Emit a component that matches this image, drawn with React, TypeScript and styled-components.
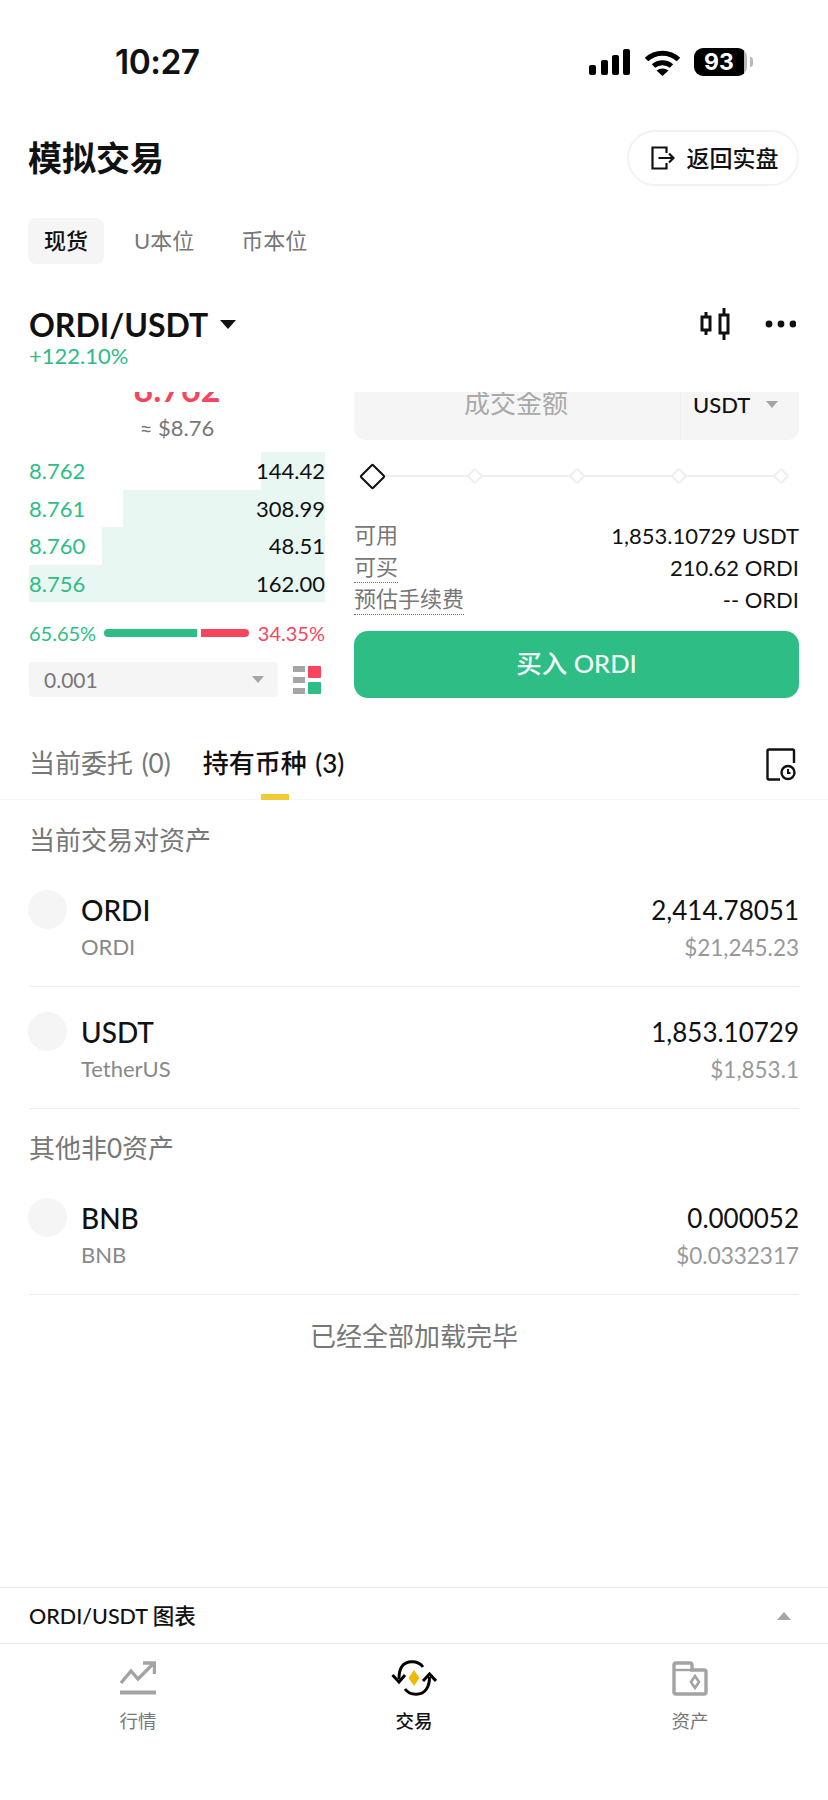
import * as React from "react";
import styled, { createGlobalStyle } from "styled-components";

const GlobalStyle = createGlobalStyle`
  html, body {
    margin: 0;
    padding: 0;
    background: #ffffff;
  }
  body {
    font-family: Lato, "Noto Sans CJK SC", sans-serif;
    color: #111111;
  }
`;

const Page = styled.div`
  width: 828px;
  height: 1800px;
  display: flex;
  flex-direction: column;
  overflow: hidden;
  background: #ffffff;
`;

const StatusBar = styled.div`
  height: 124px;
  padding: 0 81px 0 115px;
  display: flex;
  align-items: center;
  justify-content: space-between;
  box-sizing: border-box;
`;

const Clock = styled.span`
  font-family: Inter, sans-serif;
  font-size: 33.5px;
  font-weight: 600;
  letter-spacing: -0.5px;
`;

const StatusIcons = styled.div`
  display: flex;
  align-items: center;
  gap: 13px;
`;

const Battery = styled.div`
  position: relative;
  width: 53px;
  height: 28px;
  box-sizing: border-box;
  padding-right: 3px;
  border-radius: 9px;
  background: linear-gradient(to right, #000000 94%, #b9b9b9 94%);
  color: #ffffff;
  font-family: Inter, sans-serif;
  font-size: 23px;
  font-weight: 700;
  line-height: 28px;
  text-align: center;

  &::after {
    content: "";
    position: absolute;
    right: -6px;
    top: 9px;
    width: 3px;
    height: 10px;
    border-radius: 0 3px 3px 0;
    background: #b9b9b9;
  }
`;

const Header = styled.div`
  margin-top: 6px;
  padding: 0 29px 0 28px;
  height: 56px;
  display: flex;
  align-items: center;
  justify-content: space-between;
`;

const Title = styled.h1`
  margin: 0 0 4px;
  font-size: 34px;
  font-weight: 700;
`;

const BackButton = styled.div`
  width: 172px;
  height: 56px;
  box-sizing: border-box;
  padding-left: 3px;
  display: flex;
  align-items: center;
  justify-content: center;
  gap: 12px;
  border: 2px solid #f2f2f2;
  border-radius: 28px;
  font-size: 23px;
  font-weight: 500;
`;

const BackLabel = styled.span`
  margin-bottom: 2px;
`;

const MarketTabs = styled.div`
  margin-top: 32px;
  padding: 0 28px;
  display: flex;
  gap: 47px;
`;

const MarketTab = styled.div<{ $active?: boolean }>`
  height: 46px;
  box-sizing: border-box;
  padding: 0 ${(p) => (p.$active ? "16px" : "0")} 4px;
  margin-right: ${(p) => (p.$active ? "-17px" : "0")};
  display: flex;
  align-items: center;
  border-radius: 8px;
  font-size: 22px;
  font-weight: ${(p) => (p.$active ? 500 : 400)};
  color: ${(p) => (p.$active ? "#111111" : "#777777")};
  background: ${(p) => (p.$active ? "#f5f5f5" : "transparent")};
`;

const PairRow = styled.div`
  margin-top: 40px;
  padding: 0 32px 0 29px;
  height: 40px;
  display: flex;
  align-items: center;
  justify-content: space-between;
`;

const PairName = styled.div`
  display: flex;
  align-items: center;
  gap: 12px;
  font-size: 32px;
  font-weight: 700;
`;

const Caret = styled.span<{ $size: number; $color: string; $up?: boolean }>`
  display: inline-block;
  width: 0;
  height: 0;
  border-left: ${(p) => p.$size}px solid transparent;
  border-right: ${(p) => p.$size}px solid transparent;
  border-top: ${(p) => (p.$up ? "0" : `${p.$size + 1}px solid ${p.$color}`)};
  border-bottom: ${(p) => (p.$up ? `${p.$size + 1}px solid ${p.$color}` : "0")};
`;

const PairTools = styled.div`
  display: flex;
  align-items: center;
  gap: 35px;
`;

const Change = styled.div`
  padding-left: 29px;
  height: 24px;
  line-height: 24px;
  font-size: 22px;
  color: #2ebd85;
`;

const TradePanel = styled.div`
  margin-top: 24px;
  height: 328px;
  padding: 0 29px;
  overflow: hidden;
  display: grid;
  grid-template-columns: 296px 445px;
  column-gap: 29px;
  align-content: start;
`;

const BookColumn = styled.div`
  display: flex;
  flex-direction: column;
`;

const LastPrice = styled.div`
  margin-top: -21px;
  height: 36px;
  line-height: 36px;
  text-align: center;
  font-size: 34px;
  font-weight: 700;
  color: #f6465d;
`;

const FiatPrice = styled.div`
  margin-top: 9px;
  height: 24px;
  line-height: 24px;
  text-align: center;
  font-size: 22px;
  color: #777777;
`;

const Book = styled.div`
  margin-top: 12px;
`;

const BookRow = styled.div`
  position: relative;
  height: 37.6px;
  display: flex;
  align-items: center;
  justify-content: space-between;
  font-size: 22px;
`;

const DepthBar = styled.div`
  position: absolute;
  top: 0;
  right: 0;
  bottom: 0;
  background: #e9f7f2;
`;

const BookPrice = styled.span`
  position: relative;
  color: #2ebd85;
`;

const BookQty = styled.span`
  position: relative;
  color: #111111;
`;

const Ratio = styled.div`
  margin-top: 21px;
  height: 20px;
  display: flex;
  align-items: center;
  font-size: 20px;
`;

const RatioBuy = styled.span`
  width: 75px;
  color: #2ebd85;
`;

const RatioSell = styled.span`
  margin-left: auto;
  color: #f6465d;
`;

const RatioBar = styled.div<{ $color: string; $side: "left" | "right" }>`
  height: 8px;
  background: ${(p) => p.$color};
  border-radius: ${(p) => (p.$side === "left" ? "4px 0 0 4px" : "0 4px 4px 0")};
`;

const BookFooter = styled.div`
  margin-top: 19px;
  display: flex;
  align-items: center;
  justify-content: space-between;
`;

const StepSelect = styled.div`
  width: 249px;
  height: 35px;
  box-sizing: border-box;
  padding: 0 14px 0 15px;
  display: flex;
  align-items: center;
  justify-content: space-between;
  border-radius: 4px;
  background: #f5f5f5;
  font-size: 21px;
  color: #777777;
`;

const LayoutSwitch = styled.span`
  margin-right: 4px;
  height: 28px;
`;

const OrderColumn = styled.div`
  display: flex;
  flex-direction: column;
`;

const AmountInput = styled.div`
  margin-top: -24px;
  height: 72px;
  display: flex;
  align-items: center;
  border-radius: 12px;
  background: #f5f5f5;
`;

const AmountLabel = styled.div`
  flex: 1;
  margin-bottom: 6px;
  padding-right: 2px;
  text-align: center;
  font-size: 26px;
  color: #a9a9a9;
`;

const UnitPicker = styled.div`
  width: 119px;
  height: 72px;
  box-sizing: border-box;
  padding: 0 21px 0 12px;
  display: flex;
  align-items: center;
  justify-content: space-between;
  border-left: 1px solid #eeeeee;
  font-size: 22px;
  font-weight: 500;
`;

const Slider = styled.div`
  position: relative;
  margin: 23px 6px 0 6px;
  height: 26px;
  display: flex;
  align-items: center;
  justify-content: space-between;

  &::before {
    content: "";
    position: absolute;
    left: 12px;
    right: 8px;
    top: 12px;
    height: 2px;
    background: #f0f0f0;
  }
`;

const Stop = styled.span<{ $active?: boolean }>`
  position: relative;
  box-sizing: border-box;
  width: ${(p) => (p.$active ? 19 : 12)}px;
  height: ${(p) => (p.$active ? 19 : 12)}px;
  margin: 0 ${(p) => (p.$active ? 3 : 6.5)}px;
  transform: rotate(45deg);
  border-radius: 2px;
  background: #ffffff;
  border: 2px solid ${(p) => (p.$active ? "#111111" : "#eeeeee")};
`;

const InfoList = styled.div`
  margin-top: 30px;
`;

const InfoRow = styled.div`
  height: 32px;
  display: flex;
  align-items: center;
  justify-content: space-between;
  font-size: 22px;
  color: #111111;
`;

const InfoLabel = styled.span<{ $dotted?: boolean }>`
  color: #777777;
  line-height: 30px;
  border-bottom: 1px dotted ${(p) => (p.$dotted ? "#777777" : "transparent")};
`;

const BuyButton = styled.div`
  margin-top: 16px;
  height: 67px;
  box-sizing: border-box;
  padding-bottom: 6px;
  display: flex;
  align-items: center;
  justify-content: center;
  border-radius: 14px;
  background: #2ebd85;
  color: #f1fbf7;
  font-size: 25.5px;
  font-weight: 500;
`;

const OrderTabs = styled.div`
  height: 80px;
  box-sizing: border-box;
  padding: 25px 32px 0 29px;
  display: flex;
  align-items: flex-start;
  gap: 32px;
  border-bottom: 1px solid #f5f5f5;
`;

const OrderTab = styled.div<{ $active?: boolean }>`
  position: relative;
  height: 36px;
  line-height: 36px;
  font-size: 26px;
  word-spacing: 2px;
  font-weight: ${(p) => (p.$active ? 500 : 400)};
  color: ${(p) => (p.$active ? "#111111" : "#777777")};

  ${(p) =>
    p.$active &&
    `&::after {
      content: "";
      position: absolute;
      left: 58px;
      top: 49px;
      width: 28px;
      height: 6px;
      background: #f0cb35;
    }`}
`;

const HistoryButton = styled.div`
  margin: 3px 0 0 auto;
  height: 34px;
`;

const Holdings = styled.div`
  flex: 1;
  padding: 22px 29px 0;
`;

const SectionTitle = styled.div<{ $gap?: number }>`
  margin-top: ${(p) => p.$gap ?? 0}px;
  margin-bottom: 7px;
  height: 36px;
  line-height: 36px;
  font-size: 26px;
  color: #777777;
`;

const AssetRow = styled.div`
  height: 122px;
  box-sizing: border-box;
  padding-top: 25px;
  display: flex;
  border-bottom: 1px solid #eeeeee;
`;

const CoinDot = styled.div`
  width: 39px;
  height: 39px;
  margin-left: -1px;
  margin-right: 14px;
  border-radius: 50%;
  background: #f5f5f5;
`;

const AssetName = styled.div`
  height: 40px;
  line-height: 40px;
  font-size: 28px;
  font-weight: 500;
`;

const AssetSub = styled.div`
  height: 34px;
  line-height: 34px;
  font-size: 22px;
  color: #888888;
`;

const AssetValues = styled.div`
  margin-left: auto;
  text-align: right;
`;

const AssetAmount = styled.div`
  height: 40px;
  line-height: 40px;
  font-size: 26px;
`;

const AssetFiat = styled.div`
  height: 36px;
  line-height: 36px;
  font-size: 22.5px;
  color: #999999;
`;

const ListEnd = styled.div`
  margin-top: 23px;
  height: 36px;
  line-height: 36px;
  text-align: center;
  font-size: 26px;
  color: #777777;
`;

const ChartBar = styled.div`
  height: 57px;
  box-sizing: border-box;
  padding: 0 37px 0 29px;
  display: flex;
  align-items: center;
  justify-content: space-between;
  border-top: 1px solid #e8e8e8;
  border-bottom: 1px solid #e8e8e8;
  font-size: 21.5px;
  font-weight: 500;
`;

const ChartLabel = styled.span`
  margin-bottom: 3px;
`;

const TabBar = styled.div`
  height: 156px;
  padding-top: 15px;
  box-sizing: border-box;
  display: grid;
  grid-template-columns: repeat(3, 1fr);
`;

const NavItem = styled.div<{ $active?: boolean }>`
  display: flex;
  flex-direction: column;
  align-items: center;
  gap: 11px;
  font-size: 18.5px;
  line-height: 26px;
  font-weight: ${(p) => (p.$active ? 500 : 400)};
  color: ${(p) => (p.$active ? "#111111" : "#777777")};
`;

const NavIcon = styled.div`
  height: 38px;
  display: flex;
  align-items: center;
`;

const SignalIcon = () => (
  <svg width="42" height="26" viewBox="0 0 42 26">
    <rect x="0" y="16" width="7" height="10" rx="2" fill="#000" />
    <rect x="12" y="11" width="7" height="15" rx="2" fill="#000" />
    <rect x="23" y="6" width="7" height="20" rx="2" fill="#000" />
    <rect x="34" y="0" width="7" height="26" rx="2" fill="#000" />
  </svg>
);

const WifiIcon = () => (
  <svg width="37" height="27" viewBox="0 0 37 27">
    <path d="M2.5 10.5C11.5 2 25.5 2 34.5 10.5" fill="none" stroke="#000" strokeWidth="5" />
    <path d="M9.5 17C14.5 12.5 22.5 12.5 27.5 17" fill="none" stroke="#000" strokeWidth="5" />
    <path d="M12.5 21.5L18.5 27L24.5 21.5C21 18.7 16 18.7 12.5 21.5Z" fill="#000" />
  </svg>
);

const ExitIcon = () => (
  <svg width="24" height="24" viewBox="0 0 24 24" fill="none" stroke="#111" strokeWidth="2.2">
    <path d="M15.5 7V1.5H1.5V22.5H15.5V17" />
    <path d="M7.5 12H22.5M18 7.5L22.5 12L18 16.5" />
  </svg>
);

const CandleIcon = () => (
  <svg width="30" height="32" viewBox="0 0 30 32" fill="none" stroke="#111" strokeWidth="3">
    <rect x="2" y="9" width="8" height="13" />
    <rect x="20" y="7" width="8" height="18" />
    <path d="M6 4V9M6 22V27M24 0V7M24 25V32" />
  </svg>
);

const DotsIcon = () => (
  <svg width="31" height="8" viewBox="0 0 31 8" fill="#111">
    <circle cx="4" cy="4" r="3.4" />
    <circle cx="16" cy="4" r="3.4" />
    <circle cx="28" cy="4" r="3.4" />
  </svg>
);

const LayoutIcon = () => (
  <svg width="28" height="28" viewBox="0 0 28 28">
    <rect x="0" y="0" width="12" height="6" fill="#a5a5a5" />
    <rect x="0" y="11" width="12" height="6" fill="#a5a5a5" />
    <rect x="0" y="22" width="12" height="6" fill="#a5a5a5" />
    <rect x="15" y="0" width="13" height="12" rx="1" fill="#f6465d" />
    <rect x="15" y="16" width="13" height="12" rx="1" fill="#2ebd85" />
  </svg>
);

const HistoryIcon = () => (
  <svg width="30" height="33" viewBox="0 0 30 33" fill="none" stroke="#111" strokeWidth="2.4">
    <path d="M28 15V3Q28 1.500 26.500 1.500H3Q1.500 1.500 1.500 3V30Q1.500 31.500 3 31.500H14" />
    <circle cx="22" cy="24.500" r="6.500" />
    <path d="M22 21V25H24.500" strokeWidth="2" />
  </svg>
);

const MarketsIcon = () => (
  <svg width="36" height="34" viewBox="0 0 36 34" fill="none" stroke="#a3a3a3">
    <path d="M1 22L11 10L18 18L33 3" strokeWidth="3.4" />
    <path d="M23 2H34.5V13" strokeWidth="3.4" />
    <path d="M0 31.5H36" strokeWidth="4" />
  </svg>
);

const TradeIcon = () => (
  <svg width="46" height="36" viewBox="0 0 46 36" fill="none" stroke="#000" strokeWidth="3">
    <path d="M32 7C27 0 15 0 10.500 7C8.500 10.500 8 14 8 19" />
    <path d="M1.500 15L8 22L14 15" />
    <path d="M14 29C19 36 31 36 35.500 29C38 25.500 38.500 21 38.500 17" />
    <path d="M32 21L38.500 14L45 21" />
    <path d="M23 10L28.500 18L23 26L17.500 18Z" fill="#f0b90b" stroke="none" />
  </svg>
);

const WalletIcon = () => (
  <svg width="36" height="35" viewBox="0 0 36 35" fill="none" stroke="#a3a3a3" strokeWidth="3.4">
    <path d="M2 32V4Q2 2 4 2H18Q20 2 20 4V9H32Q34 9 34 11V31Q34 33 32 33H4Q2 33 2 31Z" />
    <path d="M2 9H20" strokeWidth="2.4" />
    <path d="M23 15L27 21L23 27L19 21Z" strokeWidth="2.6" />
  </svg>
);

const bookRows = [
  { price: "8.762", qty: "144.42", depth: 64 },
  { price: "8.761", qty: "308.99", depth: 202 },
  { price: "8.760", qty: "48.51", depth: 223 },
  { price: "8.756", qty: "162.00", depth: 296 },
];

const infoRows = [
  { label: "可用", value: "1,853.10729 USDT" },
  { label: "可买", value: "210.62 ORDI", dotted: true },
  { label: "预估手续费", value: "-- ORDI", dotted: true },
];

type Asset = { name: string; sub: string; amount: string; fiat: string };

const AssetItem = ({ name, sub, amount, fiat }: Asset) => (
  <AssetRow>
    <CoinDot />
    <div>
      <AssetName>{name}</AssetName>
      <AssetSub>{sub}</AssetSub>
    </div>
    <AssetValues>
      <AssetAmount>{amount}</AssetAmount>
      <AssetFiat>{fiat}</AssetFiat>
    </AssetValues>
  </AssetRow>
);

const App = () => (
  <Page>
    <GlobalStyle />
    <StatusBar>
      <Clock>10:27</Clock>
      <StatusIcons>
        <SignalIcon />
        <WifiIcon />
        <Battery>93</Battery>
      </StatusIcons>
    </StatusBar>

    <Header>
      <Title>模拟交易</Title>
      <BackButton>
        <ExitIcon />
        <BackLabel>返回实盘</BackLabel>
      </BackButton>
    </Header>

    <MarketTabs>
      <MarketTab $active>现货</MarketTab>
      <MarketTab>U本位</MarketTab>
      <MarketTab>币本位</MarketTab>
    </MarketTabs>

    <PairRow>
      <PairName>
        ORDI/USDT
        <Caret $size={8} $color="#111111" />
      </PairName>
      <PairTools>
        <CandleIcon />
        <DotsIcon />
      </PairTools>
    </PairRow>
    <Change>+122.10%</Change>

    <TradePanel>
      <BookColumn>
        <LastPrice>8.762</LastPrice>
        <FiatPrice>≈ $8.76</FiatPrice>
        <Book>
          {bookRows.map((row) => (
            <BookRow key={row.price}>
              <DepthBar style={{ width: row.depth }} />
              <BookPrice>{row.price}</BookPrice>
              <BookQty>{row.qty}</BookQty>
            </BookRow>
          ))}
        </Book>
        <Ratio>
          <RatioBuy>65.65%</RatioBuy>
          <RatioBar $color="#2ebd85" $side="left" style={{ width: 93 }} />
          <RatioBar $color="#f6465d" $side="right" style={{ width: 48, marginLeft: 4 }} />
          <RatioSell>34.35%</RatioSell>
        </Ratio>
        <BookFooter>
          <StepSelect>
            0.001
            <Caret $size={6} $color="#a5a5a5" />
          </StepSelect>
          <LayoutSwitch>
            <LayoutIcon />
          </LayoutSwitch>
        </BookFooter>
      </BookColumn>

      <OrderColumn>
        <AmountInput>
          <AmountLabel>成交金额</AmountLabel>
          <UnitPicker>
            USDT
            <Caret $size={6} $color="#a5a5a5" />
          </UnitPicker>
        </AmountInput>
        <Slider>
          <Stop $active />
          <Stop />
          <Stop />
          <Stop />
          <Stop />
        </Slider>
        <InfoList>
          {infoRows.map((row) => (
            <InfoRow key={row.label}>
              <InfoLabel $dotted={row.dotted}>{row.label}</InfoLabel>
              <span>{row.value}</span>
            </InfoRow>
          ))}
        </InfoList>
        <BuyButton>买入 ORDI</BuyButton>
      </OrderColumn>
    </TradePanel>

    <OrderTabs>
      <OrderTab>当前委托 (0)</OrderTab>
      <OrderTab $active>持有币种 (3)</OrderTab>
      <HistoryButton>
        <HistoryIcon />
      </HistoryButton>
    </OrderTabs>

    <Holdings>
      <SectionTitle>当前交易对资产</SectionTitle>
      <AssetItem name="ORDI" sub="ORDI" amount="2,414.78051" fiat="$21,245.23" />
      <AssetItem name="USDT" sub="TetherUS" amount="1,853.10729" fiat="$1,853.1" />
      <SectionTitle $gap={21}>其他非0资产</SectionTitle>
      <AssetItem name="BNB" sub="BNB" amount="0.000052" fiat="$0.0332317" />
      <ListEnd>已经全部加载完毕</ListEnd>
    </Holdings>

    <ChartBar>
      <ChartLabel>ORDI/USDT 图表</ChartLabel>
      <Caret $size={7} $color="#a5a5a5" $up />
    </ChartBar>

    <TabBar>
      <NavItem>
        <NavIcon>
          <MarketsIcon />
        </NavIcon>
        行情
      </NavItem>
      <NavItem $active>
        <NavIcon>
          <TradeIcon />
        </NavIcon>
        交易
      </NavItem>
      <NavItem>
        <NavIcon>
          <WalletIcon />
        </NavIcon>
        资产
      </NavItem>
    </TabBar>
  </Page>
);

export default App;
